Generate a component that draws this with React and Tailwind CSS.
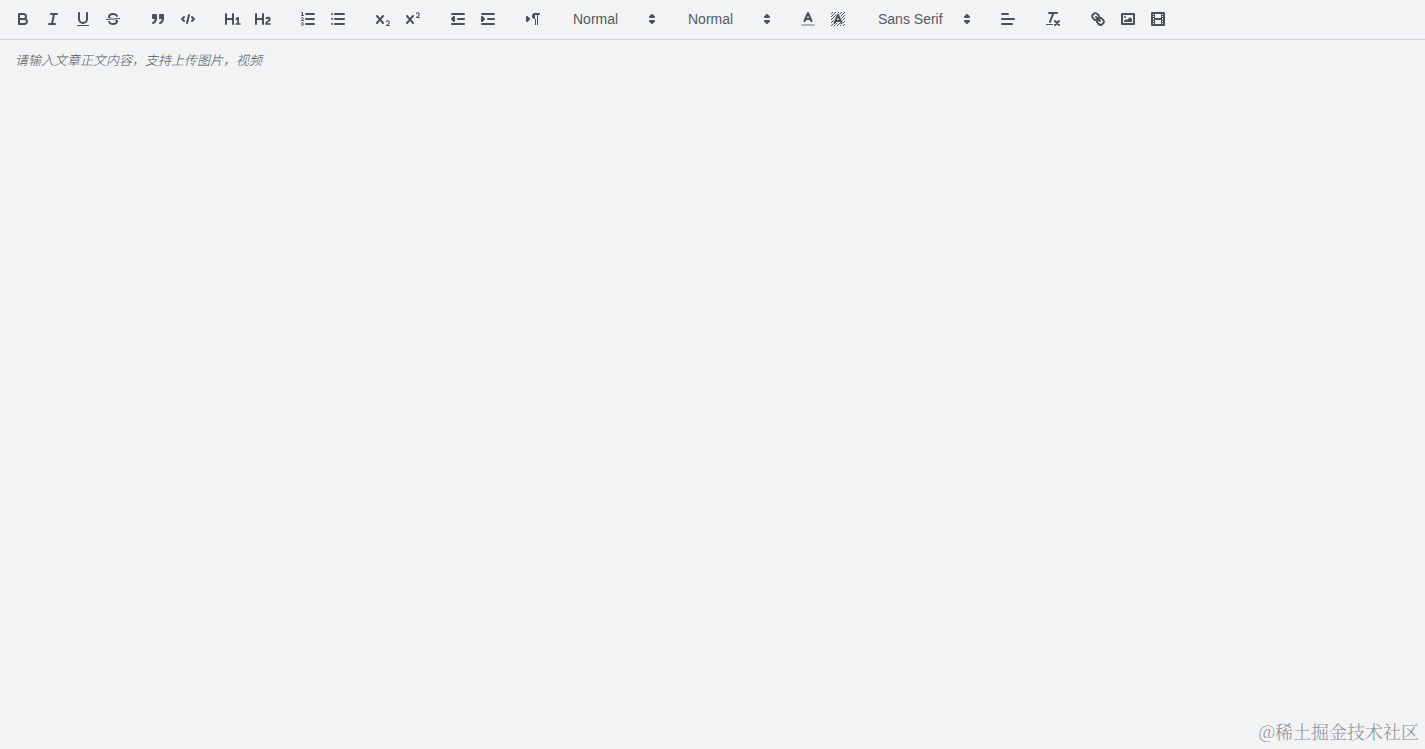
// Rich text editor: toolbar + empty content area
const S = ({ d, ...rest }) => (
  <path d={d} fill="none" stroke="currentColor" strokeWidth="2" strokeLinecap="round" strokeLinejoin="round" {...rest} />
);
const F = ({ d }) => <path d={d} fill="currentColor" />;
const Both = ({ d }) => <S d={d} fill="currentColor" />;
const Thin = ({ d }) => <S d={d} strokeWidth="1" />;

const X_PATH =
  'M9.65,5.241a1,1,0,0,0-1.409.108L6,7.964,3.759,5.349A1,1,0,0,0,2.192,6.592Q2.215,6.621,2.241,6.649L4.684,9.5,2.241,12.35A1,1,0,0,0,3.71,13.707q0.026-.028.049-0.057L6,11.036,8.241,13.65a1,1,0,1,0,1.567-1.243Q9.785,12.378,9.759,12.35L7.316,9.5,9.759,6.651A1,1,0,0,0,9.65,5.241Z';

const icons = {
  bold: (
    <>
      <S d="M5,4H9.5A2.5,2.5,0,0,1,12,6.5v0A2.5,2.5,0,0,1,9.5,9H5V4Z" />
      <S d="M5,9h5.5A2.5,2.5,0,0,1,13,11.5v0A2.5,2.5,0,0,1,10.5,14H5V9Z" />
    </>
  ),
  italic: <S d="M7,4H13M5,14H11M8,14L10,4" />,
  underline: (
    <>
      <S d="M5,3V9a4.012,4.012,0,0,0,4,4H9a4.012,4.012,0,0,0,4-4V3" />
      <rect x="3" y="15" width="12" height="1" rx="0.5" fill="currentColor" />
    </>
  ),
  strike: (
    <>
      <Thin d="M15.5,8.5L2.5,9.5" />
      <F d="M9.007,8C6.542,7.791,6,7.519,6,6.5,6,5.792,7.283,5,9,5c1.571,0,2.765.679,2.969,1.309a1,1,0,0,0,1.9-.617C13.356,4.106,11.354,3,9,3,6.2,3,4,4.538,4,6.5a3.2,3.2,0,0,0,.5,1.843Z" />
      <F d="M8.984,10C11.457,10.208,12,10.479,12,11.5c0,0.708-1.283,1.5-3,1.5-1.571,0-2.765-.679-2.969-1.309a1,1,0,1,0-1.9.617C4.644,13.894,6.646,15,9,15c2.8,0,5-1.538,5-3.5a3.2,3.2,0,0,0-.5-1.843Z" />
    </>
  ),
  quote: (
    <>
      <Both d="M4,5h3v3h-3ZM11,5h3v3h-3Z" />
      <Both d="M7,8c0,4.031-3,5-3,5M14,8c0,4.031-3,5-3,5" />
    </>
  ),
  code: <S d="M5,7L3,9L5,11M13,7L15,9L13,11M10,5L8,13" />,
  h1: (
    <F d="M10,4V14a1,1,0,0,1-2,0V10H3v4a1,1,0,0,1-2,0V4A1,1,0,0,1,3,4V8H8V4a1,1,0,0,1,2,0Zm6.06787,9.209H14.98975V7.59863a.54085.54085,0,0,0-.605-.60547h-.62744a1.01119,1.01119,0,0,0-.748.29688L11.645,8.56641a.5435.5435,0,0,0-.022.8584l.28613.30762a.53861.53861,0,0,0,.84717.0332l.09912-.08789a1.2137,1.2137,0,0,0,.2417-.35254h.02246s-.01123.30859-.01123.60547V13.209H12.041a.54085.54085,0,0,0-.605.60547v.43945a.54085.54085,0,0,0,.605.60547h4.02686a.54085.54085,0,0,0,.605-.60547v-.43945A.54085.54085,0,0,0,16.06787,13.209Z" />
  ),
  h2: (
    <F d="M16.73975,13.81445v.43945a.54085.54085,0,0,1-.605.60547H11.855a.58392.58392,0,0,1-.64893-.60547V14.0127c0-2.90527,3.39941-3.42187,3.39941-4.55469a.77675.77675,0,0,0-.84717-.78125,1.17684,1.17684,0,0,0-.83594.38477c-.2749.26367-.561.374-.85791.13184l-.4292-.34082c-.30811-.24219-.38525-.51758-.1543-.81445a2.97155,2.97155,0,0,1,2.45361-1.17676,2.45393,2.45393,0,0,1,2.68408,2.40918c0,2.45312-3.1792,2.92676-3.27832,3.93848h2.79443A.54085.54085,0,0,1,16.73975,13.81445ZM9,3A.99974.99974,0,0,0,8,4V8H3V4A1,1,0,0,0,1,4V14a1,1,0,0,0,2,0V10H8v4a1,1,0,0,0,2,0V4A.99974.99974,0,0,0,9,3Z" />
  ),
  ordered: (
    <>
      <S d="M7,4H15M7,9H15M7,14H15" />
      <Thin d="M2.5,5.5H4.5" />
      <F d="M3.5,6A0.5,0.5,0,0,1,3,5.5V3.085l-0.276.138A0.5,0.5,0,0,1,2.053,3c-0.124-.247-0.023-0.324.224-0.447l1-.5A0.5,0.5,0,0,1,4,2.5v3A0.5,0.5,0,0,1,3.5,6Z" />
      <Thin d="M4.5,10.5h-2c0-.234,1.85-1.076,1.85-2.234A0.959,0.959,0,0,0,2.5,8.156" />
      <Thin d="M2.5,14.846a0.959,0.959,0,0,0,1.85-.109A0.7,0.7,0,0,0,3.75,14a0.688,0.688,0,0,0,.6-0.736,0.959,0.959,0,0,0-1.85-.109" />
    </>
  ),
  bullet: <S d="M6,4H15M6,9H15M6,14H15M3,4H3M3,9H3M3,14H3" />,
  sub: (
    <>
      <F d="M15.5,15H13.861a3.858,3.858,0,0,0,1.914-2.975,1.8,1.8,0,0,0-1.6-1.751A1.921,1.921,0,0,0,12.021,11.7a0.5,0.5,0,1,0,.957.291h0a0.914,0.914,0,0,1,1.053-.725,0.81,0.81,0,0,1,.744.762c0,1.076-1.17,1.87-1.94,2.431A1.456,1.456,0,0,0,12,15.5a0.5,0.5,0,0,0,.5.5h3A0.5,0.5,0,0,0,15.5,15Z" />
      <F d={X_PATH} />
    </>
  ),
  sup: (
    <>
      <F d="M15.5,7H13.861a4.015,4.015,0,0,0,1.914-2.975,1.8,1.8,0,0,0-1.6-1.751A1.922,1.922,0,0,0,12.021,3.7a0.5,0.5,0,1,0,.957.291,0.917,0.917,0,0,1,1.053-.725,0.81,0.81,0,0,1,.744.762c0,1.077-1.164,1.925-1.934,2.486A1.423,1.423,0,0,0,12,7.5a0.5,0.5,0,0,0,.5.5h3A0.5,0.5,0,0,0,15.5,7Z" />
      <F d={X_PATH} />
    </>
  ),
  outdent: (
    <>
      <S d="M3,14H15M3,4H15M9,9H15" />
      <Both d="M5,7V11L3,9Z" />
    </>
  ),
  indent: (
    <>
      <S d="M3,14H15M3,4H15M9,9H15" />
      <Both d="M3,7V11L5,9Z" />
    </>
  ),
  direction: (
    <>
      <Both d="M3,11L5,9L3,7Z" />
      <S d="M15,4H11" />
      <F d="M11,3a3,3,0,0,0,0,6h1V3H11ZM11,4h1v11h-1ZM13,4h1v11h-1Z" />
    </>
  ),
  color: (
    <>
      <S d="M3,15H15" opacity="0.4" />
      <S d="M5.5,11L9,3L12.5,11M11.63,9H6.38" />
    </>
  ),
  background: (
    <>
      <defs>
        <pattern id="hatch" width="3" height="3" patternUnits="userSpaceOnUse">
          <path d="M2,0h1v1h-1ZM1,1h1v1h-1ZM0,2h1v1h-1Z" fill="currentColor" />
        </pattern>
      </defs>
      <rect x="2" y="2" width="14" height="14" fill="url(#hatch)" />
      {/* clear strip between the hatch and the letter */}
      <path d="M5.5,13L9,5L12.5,13" fill="#f2f3f5" stroke="#f2f3f5" strokeWidth="3.4" strokeLinecap="round" strokeLinejoin="round" />
      <S d="M5.5,13L9,5L12.5,13M11.63,11H6.38" />
    </>
  ),
  align: <S d="M3,9H15M3,14H13M3,4H9" />,
  clean: (
    <>
      <S d="M5,3H13M6,12L9.35,3M11,11L15,15M15,11L11,15" />
      <rect x="2" y="14" width="7" height="1" rx="0.5" fill="currentColor" />
    </>
  ),
  link: (
    <>
      <S d="M7,7L11,11" />
      <S d="M8.9,4.577a3.476,3.476,0,0,1,.36,4.679A3.476,3.476,0,0,1,4.577,8.9C3.185,7.5,2.035,6.4,4.217,4.217S7.5,3.185,8.9,4.577Z" />
      <S d="M13.423,9.1a3.476,3.476,0,0,0-4.679-.36,3.476,3.476,0,0,0,.36,4.679c1.392,1.392,2.5,2.542,4.679.36S14.815,10.5,13.423,9.1Z" />
    </>
  ),
  image: (
    <>
      <S d="M3,4h12v10h-12Z" />
      <circle cx="6" cy="7" r="1" fill="currentColor" />
      <F d="M5,12V11L7,9L8,10L11,7L13,9V12Z" />
    </>
  ),
  video: (
    <>
      <S d="M3,3h12v12h-12Z" />
      <F d="M5,3h1v12h-1ZM12,3h1v12h-1ZM5,8h8v2h-8ZM3,5h3v1h-3ZM3,7h3v1h-3ZM3,10h3v1h-3ZM3,12h3v1h-3ZM12,5h3v1h-3ZM12,7h3v1h-3ZM12,10h3v1h-3ZM12,12h3v1h-3Z" />
    </>
  ),
};

const groups = [
  ['bold', 'italic', 'underline', 'strike'],
  ['quote', 'code'],
  ['h1', 'h2'],
  ['ordered', 'bullet'],
  ['sub', 'sup'],
  ['outdent', 'indent'],
  ['direction'],
  [{ label: 'Normal', width: 'w-[98px]' }],
  [{ label: 'Normal', width: 'w-[98px]' }],
  ['color', 'background'],
  [{ label: 'Sans Serif', width: 'w-[108px]' }],
  ['align'],
  ['clean'],
  ['link', 'image', 'video'],
];

function ToolButton({ name }) {
  return (
    <button type="button" aria-label={name} className="flex h-6 w-7 items-center justify-center">
      <svg viewBox="0 0 18 18" className="size-[18px]">{icons[name]}</svg>
    </button>
  );
}

function Picker({ label, width }) {
  return (
    <button type="button" className={`${width} flex h-6 items-center justify-between pr-px pl-[9px] text-sm font-medium text-[#555a61]`}>
      <span>{label}</span>
      <svg viewBox="0 0 18 18" className="size-[18px] text-[#4a4f58]">
        <Both d="M7,11L9,13L11,11Z" />
        <Both d="M7,7L9,5L11,7Z" />
      </svg>
    </button>
  );
}

export default function App() {
  return (
    <div className="flex h-screen flex-col overflow-hidden bg-[#f2f3f5] font-['Liberation_Sans','Noto_Sans_CJK_SC',sans-serif]">
      <div className="flex h-10 shrink-0 gap-[17px] border-b border-[#d1d5da] pt-[7px] pl-[9px] text-[#4a4f58]">
        {groups.map((group, i) => (
          <div key={i} className="flex gap-0.5">
            {group.map((item) =>
              typeof item === 'string' ? <ToolButton key={item} name={item} /> : <Picker key={item.label} {...item} />
            )}
          </div>
        ))}
      </div>
      <div className="flex-1 px-[15px] py-3 text-[13px] leading-[18px] font-light text-[#505255] italic">
        请输入文章正文内容，支持上传图片，视频
      </div>
      <div className="self-end pr-1.5 pb-[5px] font-['Noto_Serif_CJK_SC','Noto_Sans_CJK_SC',serif] text-lg leading-[26px] font-light text-[#8f9194]">
        @稀土掘金技术社区
      </div>
    </div>
  );
}
